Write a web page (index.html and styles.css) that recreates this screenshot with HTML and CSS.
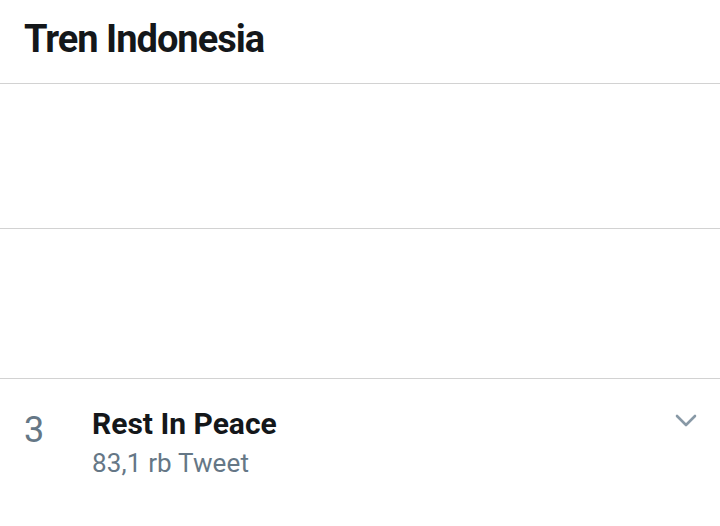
FILE: index.html
```html
<!DOCTYPE html>
<html>
<head>
<meta charset="utf-8">
<link rel="stylesheet" href="styles.css">
</head>
<body>
<div class="page">
  <header class="header"><h1 class="title">Tren Indonesia</h1></header>
  <div class="blank blank-a"></div>
  <div class="blank blank-b"></div>
  <div class="trend">
    <div class="rank">3</div>
    <div class="info">
      <div class="name">Rest In Peace</div>
      <div class="count">83,1 rb Tweet</div>
    </div>
    <svg class="chevron" width="22" height="14" viewBox="0 0 22 14"><path d="M2 2 L11 11 L20 2" fill="none" stroke="#8899a6" stroke-width="2.6" stroke-linecap="round" stroke-linejoin="round"/></svg>
  </div>
</div>
</body>
</html>
```
FILE: styles.css
```css
html, body { margin: 0; padding: 0; background: #fff; }
body { font-family: Roboto, "Noto Sans", sans-serif; width: 720px; height: 526px; overflow: hidden; }
.page { display: flex; flex-direction: column; }
.header { border-bottom: 1px solid #d2d2d2; box-sizing: border-box; height: 84px; display: flex; align-items: flex-start; padding: 20px 0 0 24px; }
.title { margin: 0; font-size: 38px; font-weight: 700; color: #14171a; letter-spacing: -1px; line-height: 38px; }
.blank { border-bottom: 1px solid #d2d2d2; }
.blank-a { height: 144px; }
.blank-b { height: 149px; }
.trend { display: flex; align-items: flex-start; padding: 0 0 0 24px; }
.rank { width: 68px; font-size: 36px; color: #657786; line-height: 36px; padding-top: 33px; }
.info { flex: 1; padding-top: 27px; }
.name { font-size: 30px; font-weight: 700; color: #14171a; line-height: 36px; }
.count { font-size: 26px; color: #657786; line-height: 32px; margin-top: 5px; letter-spacing: 0.15px; }
.chevron { margin: 35px 23px 0 0; }
```
